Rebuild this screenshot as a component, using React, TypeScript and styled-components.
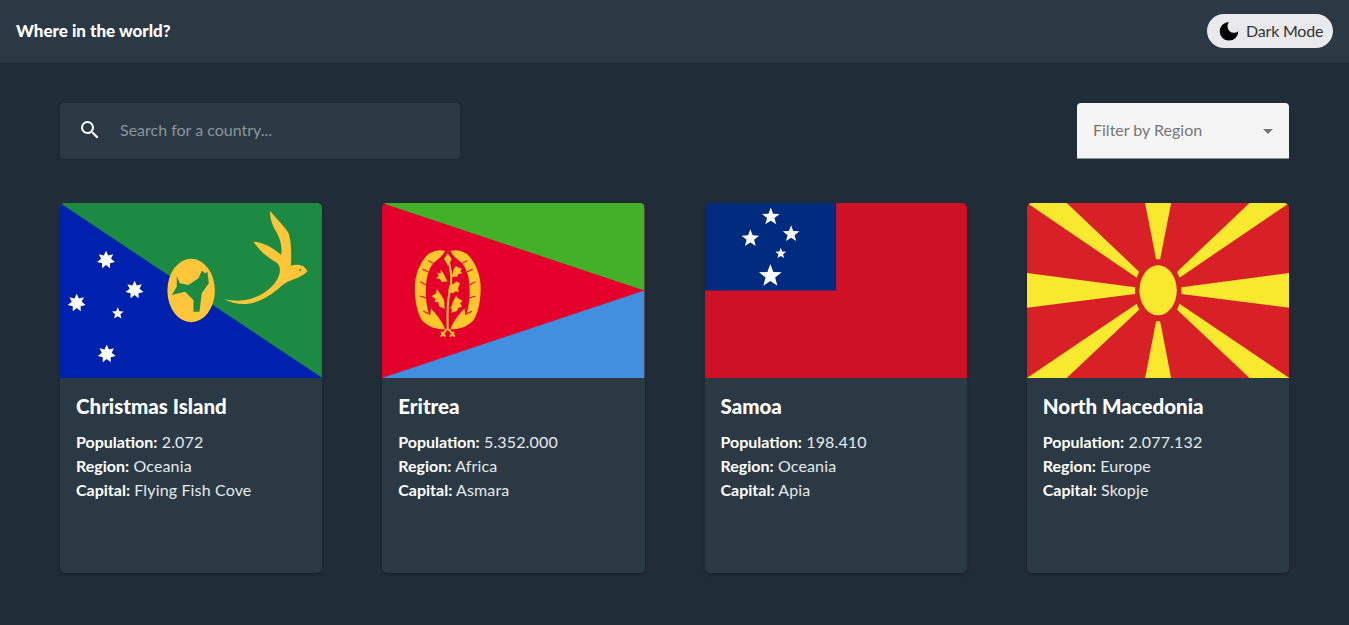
import React from "react";
import styled, { createGlobalStyle } from "styled-components";
import { MdSearch, MdArrowDropDown } from "react-icons/md";

const Global = createGlobalStyle`
  html, body { margin: 0; padding: 0; background: #202c37; }
  body { font-family: "Lato", "Open Sans", sans-serif; color: #fff; }
  * { box-sizing: border-box; }
`;
const Page = styled.div`min-height: 625px; background: #202c37;`;
const Header = styled.header`
  height: 63px; background: #2b3945; display: flex; align-items: center;
  justify-content: space-between; padding: 0 16px;
`;
const Title = styled.h1`margin: 0 0 3px; font-size: 17px; font-weight: 900; color: #fff;`;
const ModeButton = styled.button`
  height: 34px; width: 126px; border: 0; border-radius: 17px; background: #e9e9ee; color: #333;
  display: flex; align-items: center; gap: 7px; padding: 0 0 0 12px; white-space: nowrap;
  font: 400 16px "Lato", sans-serif; letter-spacing: -.2px; margin-bottom: 1px;
`;
const ModeLabel = styled.span`margin-bottom: 2px;`;
const Main = styled.main`padding: 40px 60px 0;`;
const Controls = styled.div`display: flex; justify-content: space-between; margin-bottom: 44px;`;
const SearchBox = styled.label`
  width: 400px; height: 56px; background: #2b3945; border-radius: 4px; display: flex; align-items: center;
  padding: 0 18px; gap: 18px; color: #fff; box-shadow: 0 1px 3px rgba(0,0,0,.12);
`;
const SearchIcon = styled(MdSearch)`margin-bottom: 3px; flex: none;`;
const SearchInput = styled.input`
  flex: 1; min-width: 0; border: 0; outline: 0; background: transparent; color: #fff; padding: 0 0 4px;
  font: 400 16px "Lato", sans-serif;
  &::placeholder { color: #8b959d; opacity: 1; }
`;
const Select = styled.div`
  width: 212px; height: 56px; background: #f5f5f5; border-bottom: 1px solid #8f8f8f; border-radius: 4px 4px 0 0;
  display: flex; align-items: center; justify-content: space-between; padding: 0 9px 0 16px; color: #757575; font-size: 16px;
`;
const SelectLabel = styled.span`margin-bottom: 2px;`;
const Grid = styled.div`display: grid; grid-template-columns: repeat(4, 1fr); gap: 60px;`;
const Card = styled.article`
  height: 370px; background: #2b3945; border-radius: 5px; overflow: hidden;
  box-shadow: 0 2px 3px rgba(0,0,0,.22);
`;
const FlagSvg = styled.svg`display: block; width: 100%; height: 175px;`;
const Body = styled.div`padding: 16px;`;
const Name = styled.h2`margin: 0 0 12px; font-size: 20.5px; line-height: 24px; font-weight: 900; color: #fff;`;
const Info = styled.p`margin: 0; font-size: 16px; line-height: 24px; font-weight: 400; color: #e6eaec; letter-spacing: .15px;`;
const Label = styled.strong`font-weight: 700; color: #fff; letter-spacing: 0;`;

const star = (cx: number, cy: number, R: number, n: number, ratio: number) => {
  const pts: string[] = [];
  for (let i = 0; i < n * 2; i++) {
    const r = i % 2 ? R * ratio : R;
    const a = -Math.PI / 2 + (i * Math.PI) / n;
    pts.push(`${(cx + r * Math.cos(a)).toFixed(2)},${(cy + r * Math.sin(a)).toFixed(2)}`);
  }
  return pts.join(" ");
};

const Moon = () => (
  <svg width="20" height="20" viewBox="0 0 20 20" aria-hidden="true">
    <path fill="#000" d="M10 1A9.3 9.3 0 1 0 19.3 10.3A6.6 6.6 0 0 1 10 1Z" />
  </svg>
);

const ChristmasFlag = () => (
  <FlagSvg viewBox="0 0 262 175" preserveAspectRatio="none">
    <rect width="262" height="175" fill="#1c8a42" />
    <polygon points="0,0 262,175 0,175" fill="#0021ad" />
    <g fill="#fff">
      <polygon points={star(46, 57, 9.2, 7, 0.55)} />
      <polygon points={star(74.5, 87, 9.2, 7, 0.55)} />
      <polygon points={star(16.7, 100, 9.2, 7, 0.55)} />
      <polygon points={star(57.7, 110.5, 6.2, 5, 0.45)} />
      <polygon points={star(46.7, 151, 9.2, 7, 0.55)} />
    </g>
    <ellipse cx="131" cy="87.5" rx="23.7" ry="31.7" fill="#ffc639" />
    <g transform="translate(70 47) scale(.3333)">
      <path fill="#1c8a42" d="M140 78l9 22 26 5 30-20 10-23 10 8 7-5 4 35-21 30-7 55h-18l0-35-25-25-40 10 15-25z" />
    </g>
    <g transform="translate(-10 -8) scale(.3333)">
      <path fill="#ffc639" d="M660 47C675 68 705 95 715 115C724 140 724 185 722 212C735 208 750 208 760 214L772 228C762 240 745 248 725 255C705 262 695 272 680 285C650 310 620 323 590 327C565 329 540 322 522 313C545 317 570 320 600 312C640 300 672 275 685 245C692 228 690 212 680 203C655 190 625 165 610 140C635 140 670 158 693 180C697 150 688 125 672 100C665 85 658 65 660 47Z" />
      <circle cx="750" cy="225" r="3" fill="#1c8a42" />
    </g>
  </FlagSvg>
);

const EritreaFlag = () => (
  <FlagSvg viewBox="0 0 262 175" preserveAspectRatio="none">
    <rect width="262" height="175" fill="#e4002b" />
    <polygon points="0,0 262,0 262,87.5" fill="#43b02a" />
    <polygon points="0,175 262,87.5 262,175" fill="#418fde" />
    <g transform="translate(18 37) scale(.3333)" fill="#ffc72c">
      {[1, -1].map(side => (
        <g key={side} transform={side === -1 ? "translate(286 0) scale(-1 1)" : undefined}>
          <path d="M135 33C120 28 100 32 85 42C65 60 48 95 45 130C42 170 50 215 65 240C85 262 110 268 135 268C125 240 105 220 93 205L90 228C80 205 75 170 78 135C80 105 88 85 100 70C110 60 125 52 135 33Z" />
          <path d="M100 70L84 62M85 95L68 88M78 135L60 125M80 175L60 168M88 222L70 214" stroke="#e4002b" strokeWidth="3" fill="none" />
          <path d="M140 268L122 290M124 276L136 290" stroke="#ffc72c" strokeWidth="6" fill="none" />
        </g>
      ))}
      <path d="M143 50C152 90 160 120 148 160C140 195 142 235 143 270" stroke="#ffc72c" strokeWidth="6" fill="none" />
      <path d="M143 40l-11 16 12 22 11-21z" />
      <path d="M122 88l8 12 12 24-16 2-6-8-12-4 8-6-4-10 10 2z" />
      <path d="M185 86l-12-4-6-4-6 10-6 22 16 0 4-8 12-2-6-6z" />
      <path d="M180 130l-12-6-4 6-16 6-4 20 16 4 6-6 10 2-2-12z" />
      <path d="M112 148l6 14 12 16 4 28-16-6-4-14-10 0 2-10-12-8 12-6z" />
      <path d="M168 168l8 8 12 6-8 8 6 10-12 4-2 8-18 6 2-26 6-14z" />
      <path d="M130 198C136 180 120 165 110 150" stroke="#ffc72c" strokeWidth="4" fill="none" />
      <path d="M152 205C160 195 165 190 172 180" stroke="#ffc72c" strokeWidth="4" fill="none" />
    </g>
  </FlagSvg>
);

const SamoaFlag = () => (
  <FlagSvg viewBox="0 0 262 175" preserveAspectRatio="none">
    <rect width="262" height="175" fill="#ce1126" />
    <rect width="131" height="87.5" fill="#002b7f" />
    <g fill="#fff">
      <polygon points={star(65.7, 13.8, 9.3, 5, 0.42)} />
      <polygon points={star(45.3, 35.5, 9.3, 5, 0.42)} />
      <polygon points={star(86, 31, 8.7, 5, 0.42)} />
      <polygon points={star(75.7, 50.5, 5.7, 5, 0.42)} />
      <polygon points={star(65.3, 73, 12, 5, 0.42)} />
    </g>
  </FlagSvg>
);

const MacedoniaFlag = () => (
  <FlagSvg viewBox="0 0 262 175" preserveAspectRatio="none">
    <rect width="262" height="175" fill="#d82126" />
    <g transform="translate(-7 -8) scale(.3333)" fill="#f8e92e">
      <polygon points="375,24 453,24 420,193 408,193" />
      <polygon points="375,549 453,549 420,379 408,379" />
      <polygon points="21,234 345,277 345,297 21,338" />
      <polygon points="807,234 484,277 484,297 807,338" />
      <polygon points="21,24 140,24 357,230 350,248" />
      <polygon points="807,24 688,24 471,230 478,248" />
      <polygon points="21,549 140,549 357,344 350,326" />
      <polygon points="807,549 688,549 471,344 478,326" />
      <ellipse cx="414" cy="286" rx="56" ry="75" />
    </g>
  </FlagSvg>
);

const countries = [
  { name: "Christmas Island", population: "2.072", region: "Oceania", capital: "Flying Fish Cove", Flag: ChristmasFlag },
  { name: "Eritrea", population: "5.352.000", region: "Africa", capital: "Asmara", Flag: EritreaFlag },
  { name: "Samoa", population: "198.410", region: "Oceania", capital: "Apia", Flag: SamoaFlag },
  { name: "North Macedonia", population: "2.077.132", region: "Europe", capital: "Skopje", Flag: MacedoniaFlag },
];

export default function App() {
  return (
    <Page>
      <Global />
      <Header>
        <Title>Where in the world?</Title>
        <ModeButton><Moon /><ModeLabel>Dark Mode</ModeLabel></ModeButton>
      </Header>
      <Main>
        <Controls>
          <SearchBox>
            <SearchIcon size={24} />
            <SearchInput placeholder="Search for a country..." />
          </SearchBox>
          <Select>
            <SelectLabel>Filter by Region</SelectLabel>
            <MdArrowDropDown size={24} color="#757575" />
          </Select>
        </Controls>
        <Grid>
          {countries.map(({ name, population, region, capital, Flag }) => (
            <Card key={name}>
              <Flag />
              <Body>
                <Name>{name}</Name>
                <Info><Label>Population:</Label> {population}</Info>
                <Info><Label>Region:</Label> {region}</Info>
                <Info><Label>Capital:</Label> {capital}</Info>
              </Body>
            </Card>
          ))}
        </Grid>
      </Main>
    </Page>
  );
}
